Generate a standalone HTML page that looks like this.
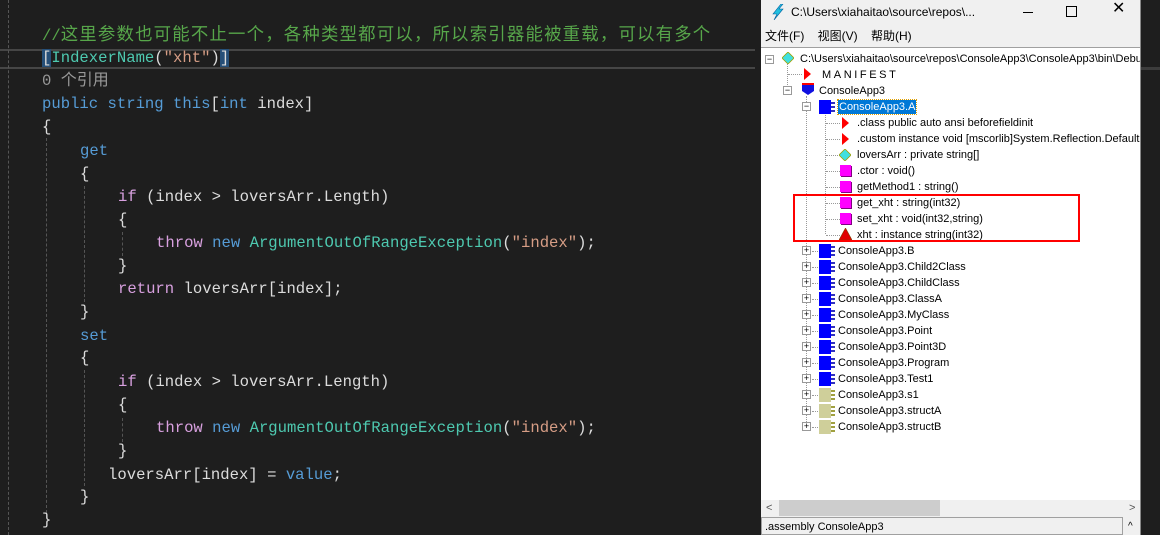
<!DOCTYPE html>
<html><head><meta charset="utf-8"><style>
*{margin:0;padding:0;box-sizing:border-box}
body{width:1160px;height:535px;overflow:hidden;background:#1e1e1e;position:relative;font-family:"Liberation Mono","Noto Sans CJK SC",monospace}
.l{position:absolute;font-size:15.6px;white-space:pre;color:#dcdcdc;line-height:20px}
.k{color:#569cd6}.c{color:#d8a0df}.t{color:#4ec9b0}.s{color:#d69d85}.cm{color:#57a64a}
.g{position:absolute;width:1px;border-left:1px dashed #555}
.win{position:absolute;left:761px;top:0;width:379px;height:535px;background:#f0f0f0;font-family:"Liberation Sans","Noto Sans CJK SC",sans-serif;font-size:11px;color:#000}
.tree{position:absolute;left:0;top:47px;width:379px;height:453px;background:#fff;border-top:1px solid #a0a0a0}
.r{position:absolute;white-space:nowrap;line-height:14px;font-size:11px}
.ic{position:absolute}
.pm{position:absolute;width:9px;height:9px;border:1px solid #999;background:#fff;font-size:9px;line-height:7px;text-align:center;color:#000}
.dv{position:absolute;border-left:1px dotted #999}
.dh{position:absolute;border-top:1px dotted #999;height:0}
.cls{position:absolute;width:12px;height:14px;background:#0000ff}
.cls:after{content:"";position:absolute;left:12px;top:2px;width:4px;height:10px;background:repeating-linear-gradient(#3030c0 0 2px,transparent 2px 4px)}
.st{background:#cfcf9a}.st:after{background:repeating-linear-gradient(#a0a040 0 2px,transparent 2px 4px)}
.mt{position:absolute;width:11px;height:11px;background:#ff00ff;box-shadow:1px 1px 0 #800080}
.tri{position:absolute;width:0;height:0;border-top:6px solid transparent;border-bottom:6px solid transparent;border-left:7px solid #f00}
</style></head><body>
<div style="position:absolute;left:0;top:49px;width:755px;height:20px;border-top:2px solid #464646;border-bottom:2px solid #464646"></div>
<div class="g" style="left:8px;top:0;height:535px"></div>
<div class="g" style="left:46px;top:138px;height:380px"></div>
<div class="g" style="left:84px;top:186px;height:116px"></div>
<div class="g" style="left:84px;top:370px;height:116px"></div>
<div class="g" style="left:122px;top:232px;height:24px"></div>
<div class="g" style="left:122px;top:418px;height:24px"></div>

<div class="l cm" style="left:42px;top:26px">//<span style="font-size:17.4px;letter-spacing:1.2px">这里参数也可能不止一个，各种类型都可以，所以索引器能被重载，可以有多个</span></div>
<div class="l" style="left:42px;top:48px"><span style="background:#264f78">[</span><span class="t">IndexerName</span>(<span class="s">"xht"</span>)<span style="background:#264f78">]</span></div>
<div class="l" style="left:42px;top:71px;color:#999">0 <span style="font-size:16px">个引用</span></div>
<div class="l" style="left:42px;top:94px"><span class="k">public string this</span>[<span class="k">int</span> index]</div>
<div class="l" style="left:42px;top:117px">{</div>
<div class="l k" style="left:80px;top:141px">get</div>
<div class="l" style="left:80px;top:164px">{</div>
<div class="l" style="left:118px;top:187px"><span class="c">if</span> (index &gt; loversArr.Length)</div>
<div class="l" style="left:118px;top:210px">{</div>
<div class="l" style="left:156px;top:233px"><span class="c">throw</span> <span class="k">new</span> <span class="t">ArgumentOutOfRangeException</span>(<span class="s">"index"</span>);</div>
<div class="l" style="left:118px;top:256px">}</div>
<div class="l" style="left:118px;top:279px"><span class="c">return</span> loversArr[index];</div>
<div class="l" style="left:80px;top:302px">}</div>
<div class="l k" style="left:80px;top:326px">set</div>
<div class="l" style="left:80px;top:348px">{</div>
<div class="l" style="left:118px;top:372px"><span class="c">if</span> (index &gt; loversArr.Length)</div>
<div class="l" style="left:118px;top:395px">{</div>
<div class="l" style="left:156px;top:418px"><span class="c">throw</span> <span class="k">new</span> <span class="t">ArgumentOutOfRangeException</span>(<span class="s">"index"</span>);</div>
<div class="l" style="left:118px;top:441px">}</div>
<div class="l" style="left:108px;top:465px">loversArr[index] = <span class="k">value</span>;</div>
<div class="l" style="left:80px;top:487px">}</div>
<div class="l" style="left:42px;top:510px">}</div>

<div class="win">
 <svg style="position:absolute;left:10px;top:4px" width="14" height="16"><path d="M10 0 L2 10 L6 10 L3 16 L12 5 L8 5 L12 0Z" fill="#20c0e0" stroke="#0060a0" stroke-width=".6"/></svg>
 <div class="r" style="left:30px;top:5px;font-size:12px">C:\Users\xiahaitao\source\repos\...</div>
 <div style="position:absolute;left:262px;top:12px;width:10px;height:1px;background:#000"></div>
 <div style="position:absolute;left:305px;top:6px;width:11px;height:11px;border:1px solid #000"></div>
 <div class="r" style="left:351px;top:2px;font-size:16px">✕</div>
 <div class="r" style="left:4px;top:29px;font-size:12px">文件(F)&nbsp;&nbsp;&nbsp; 视图(V)&nbsp;&nbsp;&nbsp; 帮助(H)</div>
 <div class="tree">
  <div class="dv" style="left:26px;top:16px;height:27px"></div>
  <div class="dv" style="left:45px;top:48px;height:330px"></div>
  <div class="dv" style="left:64px;top:64px;height:122px"></div>
  <div class="pm" style="left:4px;top:7px">−</div>
  <svg class="ic" style="left:21px;top:4px" width="12" height="12"><path d="M6 0L12 6L6 12L0 6Z" fill="#40e0e0" stroke="#a0a000" stroke-width=".8"/></svg>
  <div class="r" style="left:39px;top:4px">C:\Users\xiahaitao\source\repos\ConsoleApp3\ConsoleApp3\bin\Debug</div>
  <div class="dh" style="left:27px;top:26px;width:14px"></div>
  <div class="tri" style="left:43px;top:20px"></div>
  <div class="r" style="left:61px;top:20px;letter-spacing:2.6px">MANIFEST</div>
  <div class="pm" style="left:22px;top:38px">−</div>
  <svg class="ic" style="left:41px;top:35px" width="12" height="12"><path d="M0 0H12V8L6 12L0 8Z" fill="#1010e0"/><rect width="12" height="2" fill="#f00"/></svg>
  <div class="r" style="left:58px;top:36px">ConsoleApp3</div>
  <div class="pm" style="left:41px;top:54px">−</div>
  <div class="cls" style="left:58px;top:52px"></div>
  <div class="r" style="left:77px;top:52px;background:#0078d7;color:#fff;outline:1px dotted #e0a000;padding:0 1px">ConsoleApp3.A</div>
  <div class="dh" style="left:65px;top:75px;width:14px"></div><div class="tri" style="left:81px;top:69px"></div><div class="r" style="left:96px;top:68px">.class public auto ansi beforefieldinit</div>
  <div class="dh" style="left:65px;top:91px;width:14px"></div><div class="tri" style="left:81px;top:85px"></div><div class="r" style="left:96px;top:84px">.custom instance void [mscorlib]System.Reflection.DefaultMem</div>
  <div class="dh" style="left:65px;top:107px;width:14px"></div><svg class="ic" style="left:78px;top:101px" width="12" height="12"><path d="M6 0L12 6L6 12L0 6Z" fill="#40e0e0" stroke="#a0a000" stroke-width=".8"/></svg><div class="r" style="left:96px;top:100px">loversArr : private string[]</div>
  <div class="dh" style="left:65px;top:123px;width:14px"></div><div class="mt" style="left:79px;top:117px"></div><div class="r" style="left:96px;top:116px">.ctor : void()</div>
  <div class="dh" style="left:65px;top:139px;width:14px"></div><div class="mt" style="left:79px;top:133px"></div><div class="r" style="left:96px;top:132px">getMethod1 : string()</div>
  <div class="dh" style="left:65px;top:155px;width:14px"></div><div class="mt" style="left:79px;top:149px"></div><div class="r" style="left:96px;top:148px">get_xht : string(int32)</div>
  <div class="dh" style="left:65px;top:171px;width:14px"></div><div class="mt" style="left:79px;top:165px"></div><div class="r" style="left:96px;top:164px">set_xht : void(int32,string)</div>
  <div class="dh" style="left:65px;top:187px;width:14px"></div><svg class="ic" style="left:78px;top:180px" width="13" height="12"><path d="M6.5 0L13 12H0Z" fill="#e00000" stroke="#804000" stroke-width=".6"/></svg><div class="r" style="left:96px;top:180px">xht : instance string(int32)</div>
  <div style="position:absolute;left:32px;top:146px;width:287px;height:48px;border:2px solid #f00"></div>
 </div>
 <div id="rows"></div>
 <div style="position:absolute;left:0;top:500px;width:379px;height:16px;background:#f0f0f0"><div style="position:absolute;left:18px;top:0;width:161px;height:16px;background:#cdcdcd"></div><div class="r" style="left:5px;top:1px;color:#555">&lt;</div><div class="r" style="left:368px;top:1px;color:#555">&gt;</div></div>
 <div style="position:absolute;left:0;top:517px;width:362px;height:18px;border:1px solid #a0a0a0;background:#f0f0f0"></div>
 <div class="r" style="left:4px;top:520px">.assembly ConsoleApp3</div>
 <div class="r" style="left:367px;top:520px;font-size:10px">^</div>
 <div style="position:absolute;left:379px;top:0;width:1px;height:535px;background:#888"></div>
</div>
<div style="position:absolute;left:1141px;top:0;width:19px;height:535px;background:#1e1e1e"></div>
<div style="position:absolute;left:1141px;top:67px;width:19px;height:3px;background:#3c3c3c"></div>
<script>
var n=["B","Child2Class","ChildClass","ClassA","MyClass","Point","Point3D","Program","Test1","s1","structA","structB"],h="";
for(var i=0;i<n.length;i++){var y=48+196+i*16;var st=i>=9?" st":"";
h+='<div class="pm" style="left:41px;top:'+(y+2)+'px;position:absolute">+</div><div class="dh" style="left:51px;top:'+(y+7)+'px;width:6px"></div><div class="cls'+st+'" style="left:58px;top:'+y+'px"></div><div class="r" style="left:77px;top:'+y+'px">ConsoleApp3.'+n[i]+'</div>';}
document.getElementById("rows").innerHTML=h;
</script>
</body></html>
